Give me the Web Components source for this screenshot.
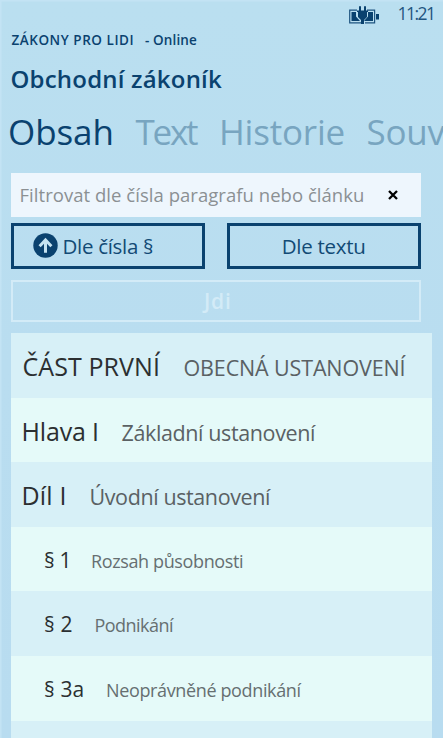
<!DOCTYPE html>
<html lang="cs">
<head>
<meta charset="utf-8">
<title>Obchodní zákoník</title>
<style>
    html, body {
        margin: 0;
        height: 738px;
        overflow: hidden;
    }

    body {
        font-family: "Open Sans", "Noto Sans", sans-serif;
    }
</style>
</head>
<body>

<law-app>
    <status-bar slot="status" time="11:21"></status-bar>
    <law-header slot="header">
        <fit-text slot="app" width="121">ZÁKONY PRO LIDI</fit-text>
        <fit-text slot="mode" width="52">- Online</fit-text>
        <fit-text slot="title" width="210.5">Obchodní zákoník</fit-text>
    </law-header>
    <pivot-tabs slot="tabs">
        <fit-text class="active" width="101.5">Obsah</fit-text>
        <fit-text width="62.5">Text</fit-text>
        <fit-text width="121.5">Historie</fit-text>
        <fit-text width="78">Souv</fit-text>
    </pivot-tabs>
    <law-filter slot="filter">
        <fit-text slot="placeholder" width="342.5">Filtrovat dle čísla paragrafu nebo článku</fit-text>
        <metro-button icon><fit-text width="88.5">Dle čísla §</fit-text></metro-button>
        <metro-button><fit-text width="80.5">Dle textu</fit-text></metro-button>
        <metro-button disabled><fit-text width="28">Jdi</fit-text></metro-button>
    </law-filter>
    <law-row><fit-text slot="label" width="137.5">ČÁST PRVNÍ</fit-text><fit-text width="222" style="margin-left: 23.5px">OBECNÁ USTANOVENÍ</fit-text></law-row>
    <law-row><fit-text slot="label" width="73.5">Hlava I</fit-text><fit-text width="194.5" style="margin-left: 24.5px">Základní ustanovení</fit-text></law-row>
    <law-row><fit-text slot="label" width="41">Díl I</fit-text><fit-text width="180.5" style="margin-left: 26px">Úvodní ustanovení</fit-text></law-row>
    <law-row level="2"><fit-text slot="label" width="22.5">§ 1</fit-text><fit-text width="151" style="margin-left: 24.5px">Rozsah působnosti</fit-text></law-row>
    <law-row level="2"><fit-text slot="label" width="26.5">§ 2</fit-text><fit-text width="78.5" style="margin-left: 24px">Podnikání</fit-text></law-row>
    <law-row level="2"><fit-text slot="label" width="37.5">§ 3a</fit-text><fit-text width="194.5" style="margin-left: 24.5px">Neoprávněné podnikání</fit-text></law-row>
    <law-row></law-row>
</law-app>

<script>
/**
 * Text tracked to an exact ink width.
 * Attributes:
 * - width: ink width in px, from the first stroke to the last
 */
class FitTextElement extends HTMLElement {
    static context = document.createElement('canvas').getContext('2d');

    constructor() {
        super();
        this.attachShadow({ mode: 'open' });
    }

    connectedCallback() {
        this.shadowRoot.innerHTML = `
            <style>
                :host { display: inline-block; flex: none; white-space: nowrap; }
                span { display: inline-block; }
            </style>
            <span><slot></slot></span>
        `;
        // parents have to be styled before the font is read
        queueMicrotask(() => this.fit());
    }

    fit() {
        const ctx = FitTextElement.context;
        const text = this.textContent;
        const width = parseFloat(this.getAttribute('width'));
        const style = getComputedStyle(this);
        ctx.font = `${style.fontWeight} ${style.fontSize} ${style.fontFamily}`;
        const box = ctx.measureText(text);
        const ink = box.actualBoundingBoxLeft + box.actualBoundingBoxRight;
        const span = this.shadowRoot.querySelector('span');
        span.style.letterSpacing = `${(width - ink) / (text.length - 1)}px`;
        span.style.marginLeft = `${box.actualBoundingBoxLeft}px`;
        this.style.width = `${width}px`;
    }
}

class StatusBarElement extends HTMLElement {
    constructor() {
        super();
        this.attachShadow({ mode: 'open' });
    }

    connectedCallback() {
        this.shadowRoot.innerHTML = `
            <style>
                :host {
                    display: flex;
                    justify-content: flex-end;
                    align-items: center;
                    gap: 19px;
                    height: 27px;
                    padding-right: 10px;
                    font-size: 17.5px;
                    line-height: 27px;
                    color: #1f5580;
                }
                svg { display: block; margin-top: 2px; }
            </style>
            <svg width="31" height="20" viewBox="0 0 31 20">
                <path d="M8 5.200H.7v12.600H12M18 5.200h7.600v12.600H16" fill="none" stroke="#1f5580" stroke-width="1.200"/>
                <path d="M2.500 7H7v4.500l4 4.500H2.500zM19 7h5v9h-9l4-4.500zM27 9h3v5.500h-3z" fill="#0a426f"/>
                <path d="M10 1.200h2V5.500h3V1.200h2V5.500h2V7h-1v5l-3 3v4h-3v-4l-3-3V7H8V5.500h2z" fill="#0a426f"/>
            </svg>
            <fit-text width="34.500">${this.getAttribute('time')}</fit-text>
        `;
    }
}

class LawHeaderElement extends HTMLElement {
    constructor() {
        super();
        this.attachShadow({ mode: 'open' });
        this.shadowRoot.innerHTML = `
            <style>
                :host { display: block; padding-left: 11.5px; color: #0a426f; font-weight: 600; }
                .app { display: flex; gap: 12.5px; font-size: 13.5px; line-height: 26px; height: 26px; }
                .title { display: flex; font-size: 24px; line-height: 52px; height: 52px; }
            </style>
            <div class="app"><slot name="app"></slot><slot name="mode"></slot></div>
            <div class="title"><slot name="title"></slot></div>
        `;
    }
}

class PivotTabsElement extends HTMLElement {
    constructor() {
        super();
        this.attachShadow({ mode: 'open' });
        this.shadowRoot.innerHTML = `
            <style>
                :host {
                    display: flex;
                    gap: 24px;
                    height: 52px;
                    padding-left: 10px;
                    margin-bottom: 16px;
                    overflow: hidden;
                    font-size: 35px;
                    line-height: 53px;
                    color: #78a5c0;
                }
                ::slotted(.active) { color: #0a426f; }
            </style>
            <slot></slot>
        `;
    }
}

/**
 * Outlined button. Attributes: icon (arrow in a disc), disabled
 */
class MetroButtonElement extends HTMLElement {
    constructor() {
        super();
        this.attachShadow({ mode: 'open' });
    }

    connectedCallback() {
        const icon = this.hasAttribute('icon') ? `
            <svg width="25" height="25" viewBox="0 0 25 25">
                <circle cx="12.500" cy="12.500" r="12.200" fill="#0a426f"/>
                <path d="M12.500 19.800V7M6.600 13.200l5.900-6.200 5.900 6.200" fill="none" stroke="#c5e3f1" stroke-width="3"/>
            </svg>` : '';
        this.shadowRoot.innerHTML = `
            <style>
                :host {
                    display: flex;
                    align-items: center;
                    justify-content: center;
                    gap: 6.5px;
                    box-sizing: border-box;
                    height: 46px;
                    border: 3px solid #0a426f;
                    font-size: 20.5px;
                    line-height: 40px;
                    color: #124a75;
                }
                :host([icon]) { justify-content: flex-start; padding-left: 19px; }
                :host([disabled]) {
                    grid-column: 1 / -1;
                    height: 42px;
                    border: 2px solid #d3ebf7;
                    font-size: 21px;
                    line-height: 39px;
                    font-weight: 600;
                    color: #d3ebf7;
                }
                svg { display: block; margin-top: -2px; }
            </style>
            ${icon}<slot></slot>
        `;
    }
}

class LawFilterElement extends HTMLElement {
    constructor() {
        super();
        this.attachShadow({ mode: 'open' });
        this.shadowRoot.innerHTML = `
            <style>
                :host { display: block; width: 410px; margin-left: 11px; }
                .field {
                    display: flex;
                    align-items: center;
                    justify-content: space-between;
                    box-sizing: border-box;
                    height: 44px;
                    padding: 0 23px 0 9.5px;
                    background: #eef6fd;
                    color: #8b9093;
                    font-size: 18.5px;
                    line-height: 46px;
                }
                .buttons {
                    display: grid;
                    grid-template-columns: 1fr 1fr;
                    gap: 11px 22px;
                    margin: 6px 0 11px;
                }
                svg { display: block; }
            </style>
            <div class="field">
                <slot name="placeholder"></slot>
                <svg width="10" height="10" viewBox="0 0 10 10">
                    <path d="M1 1l8 8M9 1l-8 8" stroke="#000" stroke-width="2.300"/>
                </svg>
            </div>
            <div class="buttons"><slot></slot></div>
        `;
    }
}

class LawRowElement extends HTMLElement {
    constructor() {
        super();
        this.attachShadow({ mode: 'open' });
        this.shadowRoot.innerHTML = `
            <style>
                :host {
                    display: flex;
                    align-items: baseline;
                    flex: none;
                    box-sizing: border-box;
                    width: 421px;
                    height: 64.6px;
                    margin-left: 11px;
                    padding-left: 12.5px;
                    line-height: 66px;
                    font-size: 21.5px;
                    color: #5a6164;
                    background: #d7f0f7;
                }
                :host(:nth-of-type(even)) { background: #e5faf9; }
                :host([level="2"]) { padding-left: 34px; line-height: 67px; font-size: 18px; color: #666f71; }
                ::slotted([slot="label"]) { font-size: 25px; color: #2b2f31; }
                :host([level="2"]) ::slotted([slot="label"]) { font-size: 21px; }
            </style>
            <slot name="label"></slot><slot></slot>
        `;
    }
}

class LawAppElement extends HTMLElement {
    constructor() {
        super();
        this.attachShadow({ mode: 'open' });
        this.shadowRoot.innerHTML = `
            <style>
                :host {
                    display: block;
                    height: 738px;
                    overflow: hidden;
                    background: linear-gradient(#badff0, #b9ddf0 50%, #b8dcf0);
                    box-shadow: inset 1.5px 1.5px 0 #c3e3f4;
                }
                .rows { display: flex; flex-direction: column; }
            </style>
            <slot name="status"></slot>
            <slot name="header"></slot>
            <slot name="tabs"></slot>
            <slot name="filter"></slot>
            <div class="rows"><slot></slot></div>
        `;
    }
}

customElements.define('law-app', LawAppElement);
customElements.define('status-bar', StatusBarElement);
customElements.define('law-header', LawHeaderElement);
customElements.define('pivot-tabs', PivotTabsElement);
customElements.define('metro-button', MetroButtonElement);
customElements.define('law-filter', LawFilterElement);
customElements.define('law-row', LawRowElement);
customElements.define('fit-text', FitTextElement);
</script>
</body>
</html>
